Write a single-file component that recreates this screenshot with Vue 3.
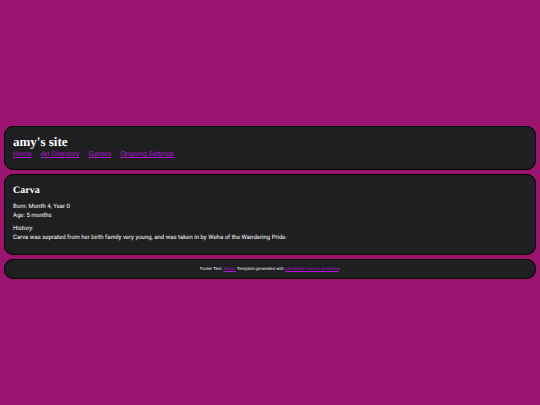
<script setup>
const links = ['Home', 'Art Directory', 'Games', 'Ongoing Settings']
</script>

<template>
  <div class="page">
    <header class="box top">
      <h1>amy's site</h1>
      <nav>
        <a v-for="link in links" :key="link" href="#">{{ link }}</a>
      </nav>
    </header>
    <main class="box">
      <h2>Carva</h2>
      <p>Born: Month 4, Year 0<br>Age: 5 months</p>
      <p>History:<br>Carva was seprated from her birth family very young, and was taken in by Weha of the Wandering Pride.</p>
    </main>
    <footer class="box foot">
      Footer Text. <a href="#">Home.</a> Template generated with <a href="#">petrapixel's layout generator</a>.
    </footer>
  </div>
</template>

<style>
body {
  background: #9b1470;
}
</style>

<style scoped>
.page {
  box-sizing: border-box;
  min-height: 100vh;
  padding: 4px;
  display: flex;
  flex-direction: column;
  justify-content: center;
  gap: 4px;
  color: #fff;
  font: 6px/9px Roboto, Arial, sans-serif;
  text-rendering: geometricPrecision;
}
.box {
  background: #1f1f21;
  border: 1px solid #000;
  border-radius: 9px;
  padding: 8px 8px 12px;
}
.top {
  padding-bottom: 8px;
}
h1,
h2 {
  margin: 0;
  font-family: "Liberation Serif", serif;
  font-weight: bold;
}
h1 {
  margin-bottom: 1px;
  font-size: 13px;
  line-height: 13px;
}
h2 {
  font-size: 10px;
  line-height: 15px;
}
nav {
  display: flex;
  gap: 9px;
  font-family: "Liberation Sans", Arial, sans-serif;
  font-size: 7px;
  line-height: 12px;
}
a {
  color: #b014d4;
  text-decoration: underline;
}
p {
  margin: 4px 0 0;
}
.foot {
  padding: 5px 8px;
  text-align: center;
  font-family: Inter, sans-serif;
  font-size: 4px;
  line-height: 8px;
}
</style>
